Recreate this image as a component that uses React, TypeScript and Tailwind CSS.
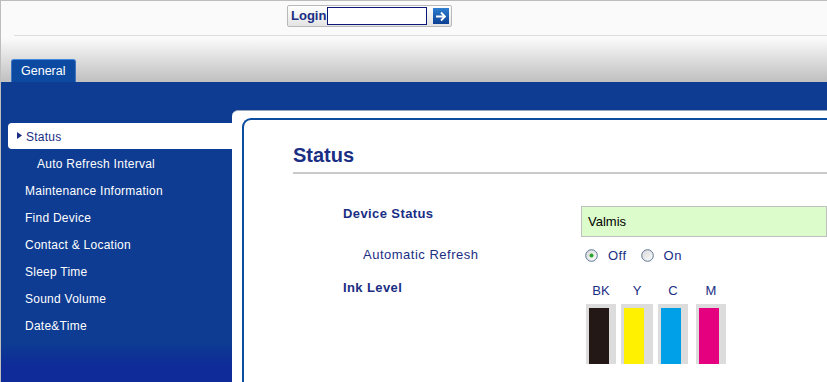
import React from "react";

const navy = "text-[#1a2e84]";

function Radio({ checked }: { checked?: boolean }) {
  return (
    <svg width="13" height="13" viewBox="0 0 13 13" className="shrink-0">
      <defs>
        <linearGradient id={checked ? "rg1" : "rg2"} x1="0" y1="0" x2="1" y2="1">
          <stop offset="0" stopColor="#d6d6d6" />
          <stop offset="1" stopColor="#ffffff" />
        </linearGradient>
      </defs>
      <circle cx="6.5" cy="6.5" r="5.8" fill={`url(#${checked ? "rg1" : "rg2"})`} stroke="#5a7696" strokeWidth="1" />
      {checked && <circle cx="6.5" cy="6.5" r="2" fill="#2aa52a" />}
    </svg>
  );
}

function Ink({ label, color, w = 30 }: { label: string; color: string; w?: number }) {
  return (
    <div className="flex flex-col items-center">
      <div className={`text-[13px] leading-[16px] ${navy}`}>{label}</div>
      <div className="mt-[5px] h-[60px] bg-[#dcdcdd] pl-[3px] pt-[4px]" style={{ width: w }}>
        <div className="h-[56px] w-[20px]" style={{ background: color }} />
      </div>
    </div>
  );
}

const menu = [
  "Maintenance Information",
  "Find Device",
  "Contact & Location",
  "Sleep Time",
  "Sound Volume",
  "Date&Time",
];

export default function App() {
  return (
    <div
      className="h-[382px] w-[827px] overflow-hidden border-l border-t border-[#bdbdbd] bg-[#fafafa]"
      style={{ fontFamily: '"Liberation Sans", Arial, sans-serif' }}
    >
      {/* top header */}
      <div className="h-[34px] pt-[4px]">
        <div className="ml-[286px] flex h-[22px] w-[165px] items-center rounded-[2px] border border-[#b9b9b9] bg-[linear-gradient(to_bottom,#ffffff,#e4e4e4)] pl-[3px]">
          <span className={`text-[13px] font-bold ${navy}`}>Login</span>
          <div className="ml-[1px] h-[18px] w-[100px] border border-[#0b1877] bg-white" />
          <div className="ml-[6px] flex h-[16px] w-[16px] items-center justify-center bg-[linear-gradient(to_bottom,#2f7fd2,#0c3f91)]">
            <svg width="12" height="11" viewBox="0 0 12 11">
              <path d="M1 5.5 H10 M6 1.5 L10 5.5 L6 9.5" stroke="#fff" strokeWidth="1.8" fill="none" />
            </svg>
          </div>
        </div>
      </div>
      <div className="ml-[13px] h-px bg-[#dddddd]" />
      {/* gradient band with tab */}
      <div className="flex h-[46px] items-end bg-[linear-gradient(to_bottom,#fafafa_5%,#c2c2c2_95%)] pl-[10px]">
        <div className="flex h-[23px] w-[65px] items-center rounded-t-[3px] border-x border-t border-x-[#3b74c0] border-t-[#3f8ae0] bg-[#0c4aa1] pl-[9px] text-[12.5px] text-white">
          General
        </div>
      </div>
      {/* main */}
      <div className="flex h-[300px] bg-[#0d3c92]">
        <div className="w-[231px] shrink-0 bg-[linear-gradient(to_bottom,#0d3c92_87%,#0f2a99_95%)] pt-[41px]">
          <div className={`ml-[7px] flex h-[26px] items-center rounded-l-[4px] bg-white pl-[9px] pt-[1px] text-[12px] tracking-[0.25px] ${navy}`}>
            <svg width="5" height="7" viewBox="0 0 5 7" className="mr-[4px] mb-[2px]">
              <path d="M0 0 L5 3.5 L0 7 Z" fill="#1a2e84" />
            </svg>
            Status
          </div>
          <div className="flex h-[27px] items-center pl-[36px] pt-[2px] text-[12px] tracking-[0.25px] text-white">Auto Refresh Interval</div>
          {menu.map((m) => (
            <div key={m} className="flex h-[27px] items-center pl-[24px] pt-[2px] text-[12px] tracking-[0.25px] text-white">
              {m}
            </div>
          ))}
        </div>
        <div className="flex-1 pt-[28px]">
          <div className="h-full rounded-tl-[6px] border-t border-[#9aa6bd] bg-white pl-[10px] pt-[7px]">
            <div className="h-full rounded-tl-[9px] border-l-2 border-t-2 border-[#0b4c9f] pl-[49px] pt-[23px]">
              <div className="border-b-2 border-[#c9c9c9] pb-[5px] text-[20px] font-bold leading-[24px] text-[#1a2e84]">Status</div>
              <div className="mt-[32px] grid grid-cols-[238px_1fr] pl-[50px]">
                <div className={`text-[13px] font-bold leading-[16px] tracking-[0.4px] ${navy}`}>Device Status</div>
                <div className="flex h-[31px] items-center border border-[#c0c0c0] bg-[#dcfccc] pl-[6px] text-[13px] text-black">Valmis</div>

                <div className={`flex h-[36px] items-center pl-[20px] text-[13px] tracking-[0.5px] ${navy}`}>Automatic Refresh</div>
                <div className={`flex h-[36px] items-center pl-[4px] pt-[1px] text-[13px] tracking-[0.5px] ${navy}`}>
                  <Radio checked />
                  <span className="ml-[10px]">Off</span>
                  <span className="ml-[14px] flex items-center">
                    <Radio />
                  </span>
                  <span className="ml-[10px]">On</span>
                </div>

                <div className={`pt-[7px] text-[13px] font-bold leading-[16px] tracking-[0.4px] ${navy}`}>Ink Level</div>
                <div className="flex pt-[10px] pl-[5px]">
                  <Ink label="BK" color="#231815" />
                  <div className="w-[5px]" />
                  <Ink label="Y" color="#fff100" w={32} />
                  <div className="w-[5px]" />
                  <Ink label="C" color="#00a0e9" />
                  <div className="w-[8px]" />
                  <Ink label="M" color="#e4007f" />
                </div>
              </div>
            </div>
          </div>
        </div>
      </div>
    </div>
  );
}
